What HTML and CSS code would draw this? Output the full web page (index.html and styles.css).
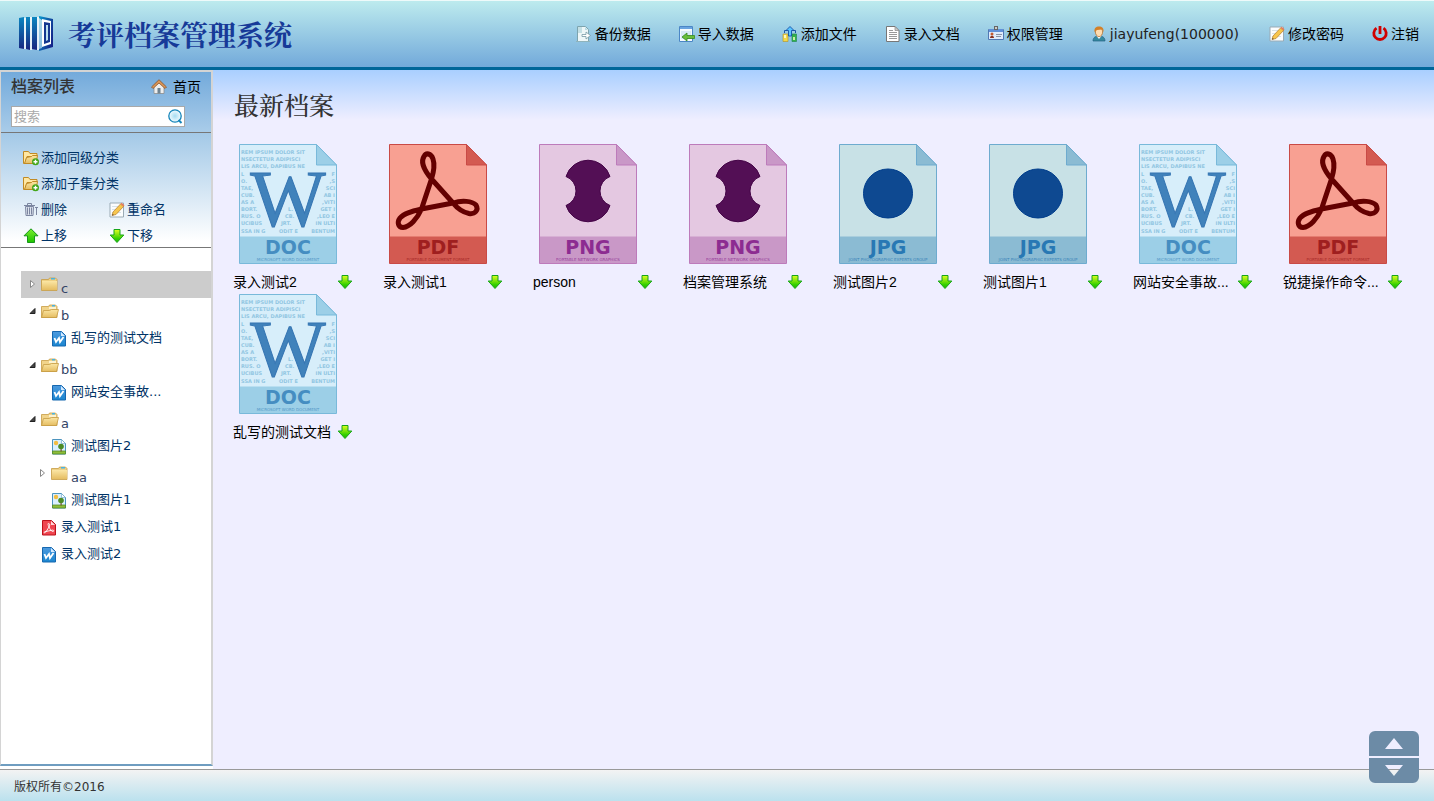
FILE: index.html
```html
<!DOCTYPE html>
<html lang="zh-CN">
<head>
<meta charset="utf-8">
<title>考评档案管理系统</title>
<link rel="stylesheet" href="styles.css">
</head>
<body>
<svg class="sprite" aria-hidden="true">
  <defs>
    <linearGradient id="g-book" x1="0" y1="0" x2="1" y2="0.6"><stop offset="0" stop-color="#0a9bd0"/><stop offset="1" stop-color="#14268a"/></linearGradient>
    <linearGradient id="g-bar" x1="0" y1="0" x2="0" y2="1"><stop offset="0" stop-color="#0b86c0"/><stop offset="1" stop-color="#17257f"/></linearGradient>
    <linearGradient id="g-folder" x1="0" y1="0" x2="0" y2="1"><stop offset="0" stop-color="#fbe6a4"/><stop offset="1" stop-color="#e5bd62"/></linearGradient>
    <linearGradient id="g-down" x1="0" y1="0" x2="0" y2="1"><stop offset="0" stop-color="#e2ff20"/><stop offset="0.7" stop-color="#35d000"/><stop offset="1" stop-color="#1fb800"/></linearGradient>
    <linearGradient id="g-green" x1="0" y1="0" x2="0" y2="1"><stop offset="0" stop-color="#7dee30"/><stop offset="1" stop-color="#1fc400"/></linearGradient>
    <linearGradient id="g-word" x1="0" y1="0" x2="0" y2="1"><stop offset="0" stop-color="#4d9ade"/><stop offset="1" stop-color="#1b86d0"/></linearGradient>
    <radialGradient id="g-lens"><stop offset="0" stop-color="#a5dcf2"/><stop offset="1" stop-color="#f4fcff"/></radialGradient>
  </defs>
  <symbol id="logo" viewBox="0 0 34 36">
    <path fill="#fff" opacity=".75" d="M4 2h3v31H4zM11 1h2v33h-2zM17 1h3v33h-3z"/>
    <path fill="url(#g-bar)" d="M0 2l5-1v32l-5-1zM7 1h4v33l-4-1zM13 1h5v33l-5-1z"/>
    <path fill="url(#g-book)" d="M20 0l14 3v28l-14 4v-2l3-1V4l-3-2z"/>
    <path fill="#fff" d="M23 3l9 2v23l-9 3z"/><path fill="#14378f" d="M25 6l6 1v19l-6 2z"/><path fill="#b9dfed" d="M27 9h2v15l-2 1z"/>
  </symbol>
  <symbol id="i-backup" viewBox="0 0 16 16">
    <path fill="#eef7f8" stroke="#7da4ae" d="M1.500 .5h8l3 3v12h-11z"/><path fill="#b9dce5" d="M9 1l3 3H9z"/><path fill="#a9d1d8" d="M2 1h4v6H2z" opacity=".6"/>
    <path fill="#fff" stroke="#769aa5" stroke-width=".8" d="M6 8.500h4V6l4.500 3.500L10 13v-2.500H6z"/><path stroke="#8fb3bb" d="M0 15.500h14"/>
  </symbol>
  <symbol id="i-import" viewBox="0 0 16 16">
    <path fill="#f5faff" stroke="#4b86c6" d="M.5.5h13v15H.5z"/><path fill="#69a4e0" d="M1 1h12v2H1z"/><path fill="#d9e9f7" d="M2 5h10v8H2z"/>
    <path fill="#69bd3b" stroke="#348a20" stroke-width=".8" d="M3 11l5-4v2.500h7.500v3H8V15z"/>
  </symbol>
  <symbol id="i-addfile" viewBox="0 0 16 16">
    <path fill="#f3d947" stroke="#b49a36" stroke-width=".7" d="M1 8h5v7.500H1z"/><path fill="#fff7bd" d="M2 9h2v3H2z"/>
    <path fill="#35b24a" stroke="#278b57" stroke-width=".7" d="M10 8h4.500v7.500H10z"/><path fill="#c7f0a5" d="M11 11h2v3h-2z"/>
    <path fill="#58c5ff" stroke="#1450a8" stroke-width=".9" d="M8 .5l4 4H9.500V10h-3V4.500H4z"/><path fill="none" stroke="#1b54a5" d="M2.500 7V4.500H5M11 4.500h2.500V7"/>
  </symbol>
  <symbol id="i-doc" viewBox="0 0 16 16">
    <path fill="#fff" stroke="#777" d="M1.500.5h8.500l4 4v11h-12.500z"/><path fill="#ccc" stroke="#888" stroke-width=".7" d="M10 .5v4h4z"/>
    <path stroke="#999" d="M4 4.500h4M4 6.500h8M4 8.500h8M4 10.500h8M4 12.500h8"/>
  </symbol>
  <symbol id="i-card" viewBox="0 0 16 16">
    <path fill="#dfeafb" stroke="#5278b3" d="M.5 3.500h15v10H.5z"/><path fill="#6190d8" d="M1 3h14v3H1z"/><path fill="#666" d="M6 0h4v4H6z"/><path fill="#ccc" d="M7 1h2v2H7z"/>
    <circle cx="4" cy="8" r="1.500" fill="#c45a31"/><path fill="#8b3220" d="M2 12c0-3 4-3 4 0z"/><path stroke="#8b93a5" d="M8 8.500h6M8 10.500h5"/>
  </symbol>
  <symbol id="i-user" viewBox="0 0 16 16">
    <path fill="#358aa0" stroke="#245f83" stroke-width=".7" d="M2 15c0-4 3-5 6-5s6 1 6 5z"/><path fill="#f4f7fa" d="M5.500 10L8 13l2.500-3z"/>
    <ellipse cx="8" cy="6" rx="3.600" ry="4.600" fill="#ffdcb0" stroke="#b06921" stroke-width=".7"/><path fill="#d48028" d="M3.500 6C3 2 5 .5 8 .5S13 2 12.500 6L11 3.500 6 4z"/>
  </symbol>
  <symbol id="i-edit" viewBox="0 0 16 16">
    <path fill="#fbfdfe" stroke="#9babb5" d="M1 1h13.500v14H1z"/><path stroke="#d9e2e7" d="M3 4.500h9M3 7.500h9M3 10.500h9"/>
    <path fill="#f7c64e" stroke="#b47d2b" stroke-width=".7" d="M4 10l7.500-8 3 2.500L7 12.500l-4 1z"/><path fill="#e77b59" d="M11.500 2l1-1.200 3 2.500-1 1.200z"/><path fill="#594632" d="M3 13.500l.5-1.500L5 13z"/>
  </symbol>
  <symbol id="i-power" viewBox="0 0 16 16"><path fill="none" stroke="#d00000" stroke-width="2.800" d="M4.500 2.200A6.200 6.200 0 1 0 11.500 2.200M8 0v8"/></symbol>
  <symbol id="i-home" viewBox="0 0 16 16">
    <path fill="#eee" stroke="#8d8d8d" stroke-width=".8" d="M3 7.500L8 3l5 4.500v7H3z"/><path fill="#6d8291" d="M6.500 9h3v5.500h-3z"/>
    <path fill="#d99557" stroke="#8c5429" stroke-width=".8" d="M.5 8L8 .7 15.500 8l-1.500 1.500L8 4 2 9.500z"/>
  </symbol>
  <symbol id="i-addfolder" viewBox="0 0 16 16">
    <path fill="#ffe7a2" stroke="#c18a24" d="M.5 1.500h5l1.500 2h7v3H4l-2 7H.5z"/><path fill="url(#g-folder)" stroke="#c18a24" d="M3.500 7.500l5-1 1-1h5l-1.500 8H1.500z"/>
    <circle cx="12.500" cy="11.800" r="3.500" fill="#43a619"/><path stroke="#fff" stroke-width="1.400" d="M10.500 11.800h4M12.500 9.800v4"/>
  </symbol>
  <symbol id="i-trash" viewBox="0 0 16 16">
    <path fill="#dbe1ec" stroke="#7c86a0" d="M2.500 4.500h8l-.5 9H3z"/><path fill="none" stroke="#7c86a0" d="M4.500 5.500v7M6.500 5.500v7M8.500 5.500v7M1 3.500h11M4.500 3V1.500h4V3M12 5.500h3M13.500 5v8"/>
  </symbol>
  <symbol id="i-up" viewBox="0 0 16 16"><path fill="url(#g-green)" stroke="#16961a" d="M8 .8l7 7h-3.500v6.700h-7V7.800H1z"/></symbol>
  <symbol id="i-down" viewBox="0 0 16 16"><path fill="url(#g-down)" stroke="#16a51a" d="M5 1.500h6V7h3.800L8 14.500 1.200 7H5z"/></symbol>
  <symbol id="i-search" viewBox="0 0 16 16"><circle cx="8" cy="7" r="6.200" fill="url(#g-lens)" stroke="#1585ba" stroke-width="1.300"/><path stroke="#1585ba" stroke-width="2" d="M11.500 11l3 3"/></symbol>
  <symbol id="i-folder" viewBox="0 0 18 16">
    <path fill="#eed083" stroke="#c69c44" stroke-width=".8" d="M.5 2.500h7l1-1.500h6l1.500 1.500v11H.5z"/><path fill="#48b3e5" d="M10 1h4v1.500h-4z"/><path fill="url(#g-folder)" d="M1 4h15v9H1z"/>
  </symbol>
  <symbol id="i-open" viewBox="0 0 18 16">
    <path fill="#f1d48b" stroke="#c69c44" stroke-width=".8" d="M.5 2.500h7l1-1.500h6l1.500 1.500v11H.5z"/><path fill="#fdf3d0" d="M8 3h7v2H8z"/><path fill="#48b3e5" d="M11 1h3v1.500h-3z"/>
    <path fill="url(#g-folder)" stroke="#c69c44" stroke-width=".8" d="M2.500 6.500h6l2-1h7l-2 8H.5z"/>
  </symbol>
  <symbol id="i-word" viewBox="0 0 14 16">
    <path fill="url(#g-word)" stroke="#1768b0" d="M.5.5h9l4 4v10.500H.5z"/><path fill="#d4eaff" d="M9 1l4 4H9z"/>
    <path fill="none" stroke="#fff" stroke-width="1.800" d="M2.500 7l1.500 4L7 7l1 4 3.500-5"/>
  </symbol>
  <symbol id="i-pdf" viewBox="0 0 14 16">
    <path fill="#ef4650" stroke="#bd111b" d="M.5.5h9l4 4v10.500H.5z"/><path fill="#ffd6d6" d="M9 1l4 4H9z"/>
    <path fill="none" stroke="#fff" stroke-width=".9" d="M7 7C5.500 4 6 3 7 3.500S8 5.500 7 7L4.500 11C3 13.500 1.500 13 2.500 11.800L11 10c1.500.5.500 2-.5 1.500C9 11 8 9 7 7"/>
  </symbol>
  <symbol id="i-image" viewBox="0 0 14 16">
    <path fill="#d9effe" stroke="#4d94be" d="M.5.500h9l4 4V15H.5z"/><path fill="#fff" stroke="#65a3c8" stroke-width=".6" d="M9.500.5v4h4z"/><circle cx="4" cy="4" r="2.200" fill="#f3bd42"/>
    <path fill="#8ebd38" stroke="#538b28" stroke-width=".8" d="M.5 12h13v3H.5z"/><path fill="#76502c" d="M8.500 8h1.200v4.500H8.500z"/><circle cx="9" cy="7.500" r="2.800" fill="#4c8b25"/>
  </symbol>
  <symbol id="i-closed" viewBox="0 0 8 10"><path fill="#fff" stroke="#888" d="M1.500 1.500v7l4-3.500z"/></symbol>
  <symbol id="i-opened" viewBox="0 0 8 10"><path fill="#444" stroke="#222" d="M6 2.500v5H1z"/></symbol>

  <symbol id="page" viewBox="0 0 100 122">
    <path class="page-sheet" d="M1.500 1.500H78.500L98.500 22V120.500H1.500z"/><path class="page-fold" d="M78.500 1.500V22H98.500z"/><path class="page-band" d="M2 93.500H98V120H2z"/>
  </symbol>
  <symbol id="swoosh" viewBox="0 0 100 122">
    <path fill="none" stroke="#640000" stroke-width="5" stroke-linejoin="round" d="M43.500 36C35 26 33 18 36 13.500C38 9.500 43 10 45 16C47 22 46 28 43.500 36L33.500 66C29 76 22 84 15 84.500C10 84.500 9 79 12 75C16 70 25 68 33.500 66L65 60C74 57 84 58 88 62C91 67 87 71.500 81 70.500C74 69 69 65 65 60Z"/>
  </symbol>
  <symbol id="spool" viewBox="0 0 100 122">
    <path fill="#530f55" stroke="#430346" d="M28 33.500A23 23 0 0 1 72 33.500A15.500 15.500 0 0 0 72 62.500A23 23 0 0 1 28 62.500A15.500 15.500 0 0 0 28 33.500Z"/>
  </symbol>
</svg>

<header class="topbar">
  <div class="brand"><svg class="brand-logo"><use href="#logo"/></svg><span class="brand-name">考评档案管理系统</span></div>
  <nav class="topnav">
    <a href="#"><svg class="icon"><use href="#i-backup"/></svg>备份数据</a>
    <a href="#"><svg class="icon"><use href="#i-import"/></svg>导入数据</a>
    <a href="#"><svg class="icon"><use href="#i-addfile"/></svg>添加文件</a>
    <a href="#"><svg class="icon"><use href="#i-doc"/></svg>录入文档</a>
    <a href="#"><svg class="icon"><use href="#i-card"/></svg>权限管理</a>
    <a class="account" href="#"><svg class="icon"><use href="#i-user"/></svg>jiayufeng(100000)</a>
    <a href="#"><svg class="icon"><use href="#i-edit"/></svg>修改密码</a>
    <a href="#"><svg class="icon"><use href="#i-power"/></svg>注销</a>
  </nav>
</header>

<div class="body">
  <aside class="sidebar">
    <div class="side-head">
      <div class="side-title"><h2>档案列表</h2><a href="#"><svg class="icon"><use href="#i-home"/></svg>首页</a></div>
      <form class="search">
        <input type="text" placeholder="搜索" aria-label="搜索">
        <button type="button" aria-label="搜索"><svg class="icon"><use href="#i-search"/></svg></button>
      </form>
    </div>
    <div class="tools">
      <a class="wide" href="#"><svg class="icon"><use href="#i-addfolder"/></svg>添加同级分类</a>
      <a class="wide" href="#"><svg class="icon"><use href="#i-addfolder"/></svg>添加子集分类</a>
      <a href="#"><svg class="icon"><use href="#i-trash"/></svg>删除</a>
      <a href="#"><svg class="icon"><use href="#i-edit"/></svg>重命名</a>
      <a href="#"><svg class="icon"><use href="#i-up"/></svg>上移</a>
      <a href="#"><svg class="icon"><use href="#i-down"/></svg>下移</a>
    </div>
    <ul class="tree">
      <li><a class="folder selected" href="#"><svg class="toggle"><use href="#i-closed"/></svg><svg class="folder-icon"><use href="#i-folder"/></svg><span>c</span></a></li>
      <li><a class="folder" href="#"><svg class="toggle"><use href="#i-opened"/></svg><svg class="folder-icon"><use href="#i-open"/></svg><span>b</span></a>
        <ul><li><a class="file" href="#"><svg class="file-icon"><use href="#i-word"/></svg><span>乱写的测试文档</span></a></li></ul>
      </li>
      <li><a class="folder" href="#"><svg class="toggle"><use href="#i-opened"/></svg><svg class="folder-icon"><use href="#i-open"/></svg><span>bb</span></a>
        <ul><li><a class="file" href="#"><svg class="file-icon"><use href="#i-word"/></svg><span>网站安全事故...</span></a></li></ul>
      </li>
      <li><a class="folder" href="#"><svg class="toggle"><use href="#i-opened"/></svg><svg class="folder-icon"><use href="#i-open"/></svg><span>a</span></a>
        <ul>
          <li><a class="file" href="#"><svg class="file-icon"><use href="#i-image"/></svg><span>测试图片2</span></a></li>
          <li><a class="folder" href="#"><svg class="toggle"><use href="#i-closed"/></svg><svg class="folder-icon"><use href="#i-folder"/></svg><span>aa</span></a></li>
          <li><a class="file" href="#"><svg class="file-icon"><use href="#i-image"/></svg><span>测试图片1</span></a></li>
        </ul>
      </li>
      <li><a class="file" href="#"><svg class="file-icon"><use href="#i-pdf"/></svg><span>录入测试1</span></a></li>
      <li><a class="file" href="#"><svg class="file-icon"><use href="#i-word"/></svg><span>录入测试2</span></a></li>
    </ul>
  </aside>

  <main class="content">
    <h1>最新档案</h1>
    <div class="files">
      <article class="card doc">
        <svg class="thumb" viewBox="0 0 100 122"><use href="#page"/>
          <g class="lorem"><text x="3" y="11">REM IPSUM DOLOR SIT</text><text x="3" y="18">NSECTETUR ADIPISCI</text><text x="3" y="25">LIS ARCU, DAPIBUS NE</text><text x="3" y="33">L</text><text x="3" y="40">O.</text><text x="3" y="47">TAE,</text><text x="3" y="54">CUB.</text><text x="3" y="61">AS A</text><text x="3" y="68">BORT.</text><text x="3" y="75">RUS. O</text><text x="3" y="82">UCIBUS</text><text x="3" y="90">SSA IN G</text><text x="50" y="68">L.</text><text x="47" y="75">CB.</text><text x="43" y="82">JRT.</text><text x="41" y="90">ODIT E</text></g>
          <g class="lorem lorem-right"><text x="97" y="33">F</text><text x="97" y="40">,S</text><text x="97" y="47">SCI</text><text x="97" y="54">AB I</text><text x="97" y="61">,VITI</text><text x="97" y="68">GET I</text><text x="97" y="75">,LEO E</text><text x="97" y="82">IN ULTI</text><text x="97" y="90">BENTUM</text></g>
          <text class="doc-w" x="50" y="83">W</text><text class="file-ext" x="50" y="111">DOC</text><text class="file-kind" x="50" y="118">MICROSOFT WORD DOCUMENT</text>
        </svg>
        <div class="caption"><span>录入测试2</span><a href="#" aria-label="下载"><svg class="icon"><use href="#i-down"/></svg></a></div>
      </article>
      <article class="card pdf">
        <svg class="thumb" viewBox="0 0 100 122"><use href="#page"/><use href="#swoosh"/><text class="file-ext" x="50" y="111">PDF</text><text class="file-kind" x="50" y="118">PORTABLE DOCUMENT FORMAT</text></svg>
        <div class="caption"><span>录入测试1</span><a href="#" aria-label="下载"><svg class="icon"><use href="#i-down"/></svg></a></div>
      </article>
      <article class="card png">
        <svg class="thumb" viewBox="0 0 100 122"><use href="#page"/><use href="#spool"/><text class="file-ext" x="50" y="111">PNG</text><text class="file-kind" x="50" y="118">PORTABLE NETWORK GRAPHICS</text></svg>
        <div class="caption"><span>person</span><a href="#" aria-label="下载"><svg class="icon"><use href="#i-down"/></svg></a></div>
      </article>
      <article class="card png">
        <svg class="thumb" viewBox="0 0 100 122"><use href="#page"/><use href="#spool"/><text class="file-ext" x="50" y="111">PNG</text><text class="file-kind" x="50" y="118">PORTABLE NETWORK GRAPHICS</text></svg>
        <div class="caption"><span>档案管理系统</span><a href="#" aria-label="下载"><svg class="icon"><use href="#i-down"/></svg></a></div>
      </article>
      <article class="card jpg">
        <svg class="thumb" viewBox="0 0 100 122"><use href="#page"/><circle class="jpg-dot" cx="50" cy="50.500" r="24.500"/><text class="file-ext" x="50" y="111">JPG</text><text class="file-kind" x="50" y="118">JOINT PHOTOGRAPHIC EXPERTS GROUP</text></svg>
        <div class="caption"><span>测试图片2</span><a href="#" aria-label="下载"><svg class="icon"><use href="#i-down"/></svg></a></div>
      </article>
      <article class="card jpg">
        <svg class="thumb" viewBox="0 0 100 122"><use href="#page"/><circle class="jpg-dot" cx="50" cy="50.500" r="24.500"/><text class="file-ext" x="50" y="111">JPG</text><text class="file-kind" x="50" y="118">JOINT PHOTOGRAPHIC EXPERTS GROUP</text></svg>
        <div class="caption"><span>测试图片1</span><a href="#" aria-label="下载"><svg class="icon"><use href="#i-down"/></svg></a></div>
      </article>
      <article class="card doc">
        <svg class="thumb" viewBox="0 0 100 122"><use href="#page"/>
          <g class="lorem"><text x="3" y="11">REM IPSUM DOLOR SIT</text><text x="3" y="18">NSECTETUR ADIPISCI</text><text x="3" y="25">LIS ARCU, DAPIBUS NE</text><text x="3" y="33">L</text><text x="3" y="40">O.</text><text x="3" y="47">TAE,</text><text x="3" y="54">CUB.</text><text x="3" y="61">AS A</text><text x="3" y="68">BORT.</text><text x="3" y="75">RUS. O</text><text x="3" y="82">UCIBUS</text><text x="3" y="90">SSA IN G</text><text x="50" y="68">L.</text><text x="47" y="75">CB.</text><text x="43" y="82">JRT.</text><text x="41" y="90">ODIT E</text></g>
          <g class="lorem lorem-right"><text x="97" y="33">F</text><text x="97" y="40">,S</text><text x="97" y="47">SCI</text><text x="97" y="54">AB I</text><text x="97" y="61">,VITI</text><text x="97" y="68">GET I</text><text x="97" y="75">,LEO E</text><text x="97" y="82">IN ULTI</text><text x="97" y="90">BENTUM</text></g>
          <text class="doc-w" x="50" y="83">W</text><text class="file-ext" x="50" y="111">DOC</text><text class="file-kind" x="50" y="118">MICROSOFT WORD DOCUMENT</text>
        </svg>
        <div class="caption"><span>网站安全事故...</span><a href="#" aria-label="下载"><svg class="icon"><use href="#i-down"/></svg></a></div>
      </article>
      <article class="card pdf">
        <svg class="thumb" viewBox="0 0 100 122"><use href="#page"/><use href="#swoosh"/><text class="file-ext" x="50" y="111">PDF</text><text class="file-kind" x="50" y="118">PORTABLE DOCUMENT FORMAT</text></svg>
        <div class="caption"><span>锐捷操作命令...</span><a href="#" aria-label="下载"><svg class="icon"><use href="#i-down"/></svg></a></div>
      </article>
      <article class="card doc">
        <svg class="thumb" viewBox="0 0 100 122"><use href="#page"/>
          <g class="lorem"><text x="3" y="11">REM IPSUM DOLOR SIT</text><text x="3" y="18">NSECTETUR ADIPISCI</text><text x="3" y="25">LIS ARCU, DAPIBUS NE</text><text x="3" y="33">L</text><text x="3" y="40">O.</text><text x="3" y="47">TAE,</text><text x="3" y="54">CUB.</text><text x="3" y="61">AS A</text><text x="3" y="68">BORT.</text><text x="3" y="75">RUS. O</text><text x="3" y="82">UCIBUS</text><text x="3" y="90">SSA IN G</text><text x="50" y="68">L.</text><text x="47" y="75">CB.</text><text x="43" y="82">JRT.</text><text x="41" y="90">ODIT E</text></g>
          <g class="lorem lorem-right"><text x="97" y="33">F</text><text x="97" y="40">,S</text><text x="97" y="47">SCI</text><text x="97" y="54">AB I</text><text x="97" y="61">,VITI</text><text x="97" y="68">GET I</text><text x="97" y="75">,LEO E</text><text x="97" y="82">IN ULTI</text><text x="97" y="90">BENTUM</text></g>
          <text class="doc-w" x="50" y="83">W</text><text class="file-ext" x="50" y="111">DOC</text><text class="file-kind" x="50" y="118">MICROSOFT WORD DOCUMENT</text>
        </svg>
        <div class="caption"><span>乱写的测试文档</span><a href="#" aria-label="下载"><svg class="icon"><use href="#i-down"/></svg></a></div>
      </article>
    </div>
  </main>
</div>

<footer class="footer">版权所有©2016</footer>

<div class="scroller">
  <button type="button" aria-label="回到顶部"><svg viewBox="0 0 50 25"><path fill="#6c8ba6" fill-rule="evenodd" d="M0 25V6a6 6 0 0 1 6-6h38a6 6 0 0 1 6 6v19zM16 18h18L25 7z"/></svg></button>
  <button type="button" aria-label="到达底部"><svg viewBox="0 0 50 25"><path fill="#6c8ba6" fill-rule="evenodd" d="M0 0v19a6 6 0 0 0 6 6h38a6 6 0 0 0 6-6V0zM16 7h18L25 18z"/></svg></button>
</div>
</body>
</html>
```
FILE: styles.css
```css
* {
  box-sizing: border-box;
}

body {
  display: flex;
  flex-direction: column;
  min-height: 100vh;
  margin: 0;
  background: #fff;
  color: #333;
  font: 14px/20px "DejaVu Sans", "Noto Sans CJK SC", sans-serif;
}

a {
  color: inherit;
  text-decoration: none;
}

ul {
  margin: 0;
  padding: 0;
  list-style: none;
}

svg {
  display: block;
  flex: none;
}

.sprite {
  position: absolute;
  width: 0;
  height: 0;
}

.icon {
  width: 16px;
  height: 16px;
}

/* Top bar */
.topbar {
  display: flex;
  justify-content: space-between;
  align-items: center;
  height: 70px;
  padding: 0 15px 0 19px;
  border-top: 1px solid #eefafa;
  border-bottom: 3px solid #069;
  background: linear-gradient(#bdebee, #72a9da);
}

.brand {
  display: flex;
  align-items: center;
  gap: 15px;
}

.brand-logo {
  width: 34px;
  height: 36px;
}

.brand-name {
  color: #173a98;
  font: bold 28px/36px KaiTi, "AR PL UKai CN", "Noto Serif CJK SC", "Noto Sans CJK SC", serif;
}

.topnav {
  display: flex;
  gap: 28px;
  color: #000;
}

.topnav a {
  display: flex;
  align-items: center;
  gap: 3px;
  white-space: nowrap;
}

.topnav .account {
  padding-right: 2px;
  color: #222;
}

/* Main area */
.body {
  display: flex;
  flex: 1;
}

.sidebar {
  flex: none;
  width: 213px;
  margin-bottom: 3px;
  border: solid rgba(140, 140, 140, 0.37);
  border-width: 2px 2px 2px 1px;
  border-bottom-color: #6f9dc0;
}

.side-head {
  padding: 4px 10px 5px;
  border-bottom: 1px solid #777;
  background: linear-gradient(#73aadb, #a9cce9);
}

.side-title {
  display: flex;
  justify-content: space-between;
  align-items: center;
  height: 22px;
}

.side-title h2 {
  margin: 0;
  font-size: 16px;
  font-weight: 500;
  line-height: 22px;
}

.side-title a {
  display: flex;
  align-items: center;
  gap: 6px;
  color: #000;
}

.search {
  display: flex;
  align-items: center;
  width: 174px;
  height: 21px;
  margin-top: 8px;
  border: 1px solid #a9a9a9;
  background: #fff;
}

.search input {
  flex: 1;
  min-width: 0;
  padding: 0 2px;
  border: 0;
  outline: 0;
  background: none;
  font: 13px/18px "DejaVu Sans", "Noto Sans CJK SC", sans-serif;
}

.search input::placeholder {
  color: #a9a9a9;
}

.search button {
  padding: 0 1px 0 0;
  border: 0;
  background: none;
}

.tools {
  display: grid;
  grid-template-columns: 86px 1fr;
  gap: 10px 0;
  padding: 17px 0 3px 22px;
  border-bottom: 1px solid #777;
  background: linear-gradient(#a3c9e7, #fff 95%);
  color: #036;
  font-size: 13px;
  line-height: 16px;
}

.tools a {
  display: flex;
  align-items: center;
  gap: 2px;
}

.tools .wide {
  grid-column: 1 / -1;
}

.tree {
  padding: 23px 0 24px 20px;
  color: #036;
  font-size: 13px;
  line-height: 27px;
}

.tree ul {
  padding-left: 10px;
}

.tree a {
  display: flex;
  height: 27px;
}

.tree .selected {
  background: #ccc;
}

.toggle {
  width: 8px;
  height: 10px;
  margin: 8px 4px 0 8px;
}

.folder-icon {
  width: 18px;
  height: 16px;
  margin: 6px 2px 0 0;
}

.folder span {
  padding-top: 4px;
  color: #346;
}

.file-icon {
  width: 14px;
  height: 16px;
  margin: 6px 5px 0 21px;
}

.file span {
  line-height: 25px;
}

.content {
  flex: 1;
  min-width: 0;
  padding: 17px 0 20px 20px;
  background: #efeeff linear-gradient(#a9cfff, #efeeff) top / 100% 50px no-repeat;
}

.content h1 {
  margin: 0 0 22px 1px;
  font: 500 25px/34px "Noto Serif CJK SC", "Noto Sans CJK SC", serif;
}

/* File cards */
.files {
  display: grid;
  grid-template-columns: repeat(auto-fill, 150px);
}

.card {
  height: 150px;
}

.thumb {
  width: 100px;
  height: 122px;
  margin-left: 5px;
}

.caption {
  display: flex;
  justify-content: space-between;
  align-items: center;
  width: 120px;
  height: 34px;
  color: #000;
  font: 14px/20px "Liberation Sans", "Noto Sans CJK SC", sans-serif;
}

.caption span {
  white-space: nowrap;
}

.page-sheet {
  fill: var(--sheet);
  stroke: var(--edge);
}

.page-fold {
  fill: var(--band);
  stroke: var(--edge);
}

.page-band {
  fill: var(--band);
}

.doc {
  --sheet: #d7eefa;
  --band: #9ccfe7;
  --edge: #79b9da;
  --ink: #458dc1;
}

.pdf {
  --sheet: #f8a092;
  --band: #d35a51;
  --edge: #c94a46;
  --ink: #9f1f1f;
}

.png {
  --sheet: #e4c8e1;
  --band: #c998c7;
  --edge: #bd7bbb;
  --ink: #8c2c91;
}

.jpg {
  --sheet: #c8e1e6;
  --band: #8bbbd3;
  --edge: #6eabcf;
  --ink: #2878b4;
}

.jpg-dot {
  fill: #0e4991;
  stroke: #003d8c;
}

.file-ext,
.file-kind {
  fill: var(--ink);
  font-family: "DejaVu Sans", sans-serif;
  text-anchor: middle;
}

.file-ext {
  font-size: 19px;
  font-weight: bold;
}

.file-kind {
  font-size: 4px;
  opacity: 0.8;
}

.lorem {
  fill: #92c6e2;
  font: bold 5px "DejaVu Sans", sans-serif;
}

.lorem-right {
  text-anchor: end;
}

.doc-w {
  fill: #4082bb;
  stroke: #3676b3;
  font: 80px "Liberation Serif", serif;
  text-anchor: middle;
}

/* Footer */
.footer {
  height: 32px;
  padding: 7px 14px;
  border-top: 1px solid #999;
  background: linear-gradient(#f3f3f3, #bbe1ee);
  font-size: 12px;
}

.scroller {
  position: fixed;
  right: 15px;
  bottom: 18px;
  display: grid;
  gap: 2px;
}

.scroller button {
  width: 50px;
  height: 25px;
  padding: 0;
  border: 0;
  background: none;
}
```
